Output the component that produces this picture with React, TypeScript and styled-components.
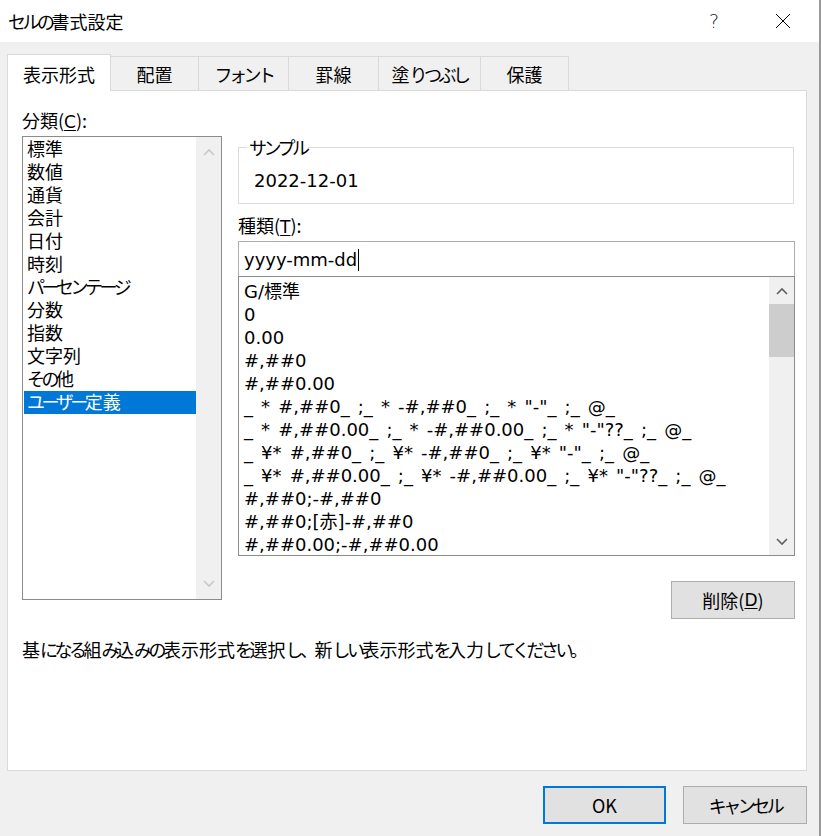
import { FC, Fragment } from "react";
import styled, { createGlobalStyle } from "styled-components";

const GlobalStyle = createGlobalStyle`
  html, body {
    margin: 0;
    padding: 0;
    background: #f0f0f0;
  }
  body {
    font-family: "DejaVu Sans", "Noto Sans CJK JP", sans-serif;
    font-size: 18px;
    color: #000;
  }
`;

const CATEGORIES = [
  "標準",
  "数値",
  "通貨",
  "会計",
  "日付",
  "時刻",
  "パーセンテージ",
  "分数",
  "指数",
  "文字列",
  "その他",
  "ユーザー定義",
];

const FORMATS = [
  "G/標準",
  "0",
  "0.00",
  "#,##0",
  "#,##0.00",
  '_ * #,##0_ ;_ * -#,##0_ ;_ * "-"_ ;_ @_',
  '_ * #,##0.00_ ;_ * -#,##0.00_ ;_ * "-"??_ ;_ @_',
  '_ ¥* #,##0_ ;_ ¥* -#,##0_ ;_ ¥* "-"_ ;_ @_',
  '_ ¥* #,##0.00_ ;_ ¥* -#,##0.00_ ;_ ¥* "-"??_ ;_ @_',
  "#,##0;-#,##0",
  "#,##0;[赤]-#,##0",
  "#,##0.00;-#,##0.00",
];

const TABS = [
  { label: "表示形式", width: 104 },
  { label: "配置", width: 88 },
  { label: "フォント", width: 90 },
  { label: "罫線", width: 90 },
  { label: "塗りつぶし", width: 102 },
  { label: "保護", width: 88 },
];

// kana in the Windows UI font are set proportionally, narrower than kanji
const KANA_RUN = /([\u3001-\u3002\u3040-\u30ff]+)/;
const Ja: FC<{ text: string }> = ({ text }) => (
  <>
    {text.split(KANA_RUN).map((part, i) =>
      i % 2 === 1 ? <Kana key={i}>{part}</Kana> : <Fragment key={i}>{part}</Fragment>
    )}
  </>
);

const Chevron: FC<{ up?: boolean; color: string }> = ({ up, color }) => (
  <svg width="12" height="8" viewBox="0 0 12 8">
    <polyline
      points={up ? "1,7 6,2 11,7" : "1,1 6,6 11,1"}
      fill="none"
      stroke={color}
      strokeWidth="1.6"
    />
  </svg>
);

export default function App() {
  return (
    <>
      <GlobalStyle />
      <Window>
        <TitleBar>
          <TitleText>
            <Ja text="セルの書式設定" />
          </TitleText>
          <HelpButton>?</HelpButton>
          <CloseButton>
            <svg width="16" height="16" viewBox="0 0 16 16">
              <path d="M1 1 L15 15 M15 1 L1 15" stroke="#000" strokeWidth="1" />
            </svg>
          </CloseButton>
        </TitleBar>

        <Body>
          <TabStrip>
            {TABS.map((t, i) => (
              <Tab key={t.label} $active={i === 0} $width={t.width}>
                <Ja text={t.label} />
              </Tab>
            ))}
          </TabStrip>

          <Panel>
            <PanelGrid>
              <Column>
                <FieldLabel>
                  分類(<u>C</u>):
                </FieldLabel>
                <ListBox $height={464}>
                  <ListItems $padTop={1} $padLeft={1}>
                    {CATEGORIES.map((c, i) => (
                      <ListItem key={c} $selected={i === CATEGORIES.length - 1} $indent={3}>
                        <Ja text={c} />
                      </ListItem>
                    ))}
                  </ListItems>
                  <ScrollBar>
                    <ScrollButton $height={30}>
                      <Chevron up color="#c8c8c8" />
                    </ScrollButton>
                    <ScrollTrack />
                    <ScrollButton $height={30}>
                      <Chevron color="#c8c8c8" />
                    </ScrollButton>
                  </ScrollBar>
                </ListBox>
              </Column>

              <Column $offset={38}>
                <GroupBox>
                  <GroupLegend>
                    <Ja text="サンプル" />
                  </GroupLegend>
                  <SampleValue>2022-12-01</SampleValue>
                </GroupBox>

                <FieldLabel $gap={10}>
                  種類(<u>T</u>):
                </FieldLabel>
                <TextBox>
                  yyyy-mm-dd
                  <Caret />
                </TextBox>
                <ListBox $height={280}>
                  <ListItems $padTop={3} $padLeft={5}>
                    {FORMATS.map((f) => (
                      <ListItem key={f} $indent={0} $wordSpacing={2.4}>
                        {f}
                      </ListItem>
                    ))}
                  </ListItems>
                  <ScrollBar>
                    <ScrollButton $height={27}>
                      <Chevron up color="#606060" />
                    </ScrollButton>
                    <ScrollTrack>
                      <ScrollThumb />
                    </ScrollTrack>
                    <ScrollButton $height={27}>
                      <Chevron color="#606060" />
                    </ScrollButton>
                  </ScrollBar>
                </ListBox>
                <DeleteRow>
                  <Button $width={124}>
                    削除(<u>D</u>)
                  </Button>
                </DeleteRow>
              </Column>
            </PanelGrid>

            <Description>
              <Ja text="基になる組み込みの表示形式を選択し、新しい表示形式を入力してください。" />
            </Description>
          </Panel>

          <Footer>
            <Button $width={123} $default>
              OK
            </Button>
            <Button $width={124}>
              <Ja text="キャンセル" />
            </Button>
          </Footer>
        </Body>
      </Window>
    </>
  );
}

const Kana = styled.span`
  letter-spacing: -3.5px;
`;

const Window = styled.div`
  width: 821px;
  height: 836px;
  display: flex;
  flex-direction: column;
  background: #f0f0f0;
  box-sizing: border-box;
  border-right: 2px solid #9a9a9a;
`;

const TitleBar = styled.div`
  height: 42px;
  flex-shrink: 0;
  display: flex;
  align-items: center;
  background: #fff;
  padding-left: 8px;
  padding-right: 13px;
`;

const TitleText = styled.div`
  flex: 1;
  font-family: "Noto Sans CJK JP", sans-serif;
  font-size: 18px;
  line-height: 24px;
`;

const HelpButton = styled.div`
  width: 46px;
  text-align: center;
  font-family: "DejaVu Sans", sans-serif;
  font-weight: 200;
  font-size: 19px;
  color: #222;
  margin-right: 23px;
`;

const CloseButton = styled.div`
  width: 46px;
  display: flex;
  justify-content: center;
`;

const Body = styled.div`
  flex: 1;
  display: flex;
  flex-direction: column;
  padding: 12px 12px 0 7px;
`;

const TabStrip = styled.div`
  display: flex;
  align-items: flex-start;
  height: 37px;
  margin-bottom: -1px;
`;

const Tab = styled.div<{ $active?: boolean; $width: number }>`
  box-sizing: border-box;
  width: ${({ $width }) => $width}px;
  display: flex;
  align-items: center;
  justify-content: center;
  font-family: "Noto Sans CJK JP", sans-serif;
  font-size: 18px;
  border: 1px solid #d9d9d9;
  ${({ $active }) =>
    $active
      ? `
    height: 37px;
    background: #fff;
    border-bottom: none;
    position: relative;
    z-index: 1;
    padding-top: 1px;
  `
      : `
    height: 35px;
    margin-top: 2px;
    border-left: none;
    background: #f0f0f0;
  `}
`;

const Panel = styled.div`
  width: 800px;
  height: 681px;
  box-sizing: border-box;
  background: #fff;
  border: 1px solid #d9d9d9;
  padding: 18px 0 0 14px;
`;

const PanelGrid = styled.div`
  display: grid;
  grid-template-columns: 200px 557px;
  column-gap: 16px;
  align-items: start;
`;

const Column = styled.div<{ $offset?: number }>`
  display: flex;
  flex-direction: column;
  padding-top: ${({ $offset }) => $offset ?? 0}px;
`;

const FieldLabel = styled.div<{ $gap?: number }>`
  height: 23px;
  font-family: "Noto Sans CJK JP", sans-serif;
  line-height: 23px;
  margin-top: ${({ $gap }) => $gap ?? 0}px;
  margin-bottom: 4px;

  u {
    font-family: "DejaVu Sans", sans-serif;
    font-size: 17px;
    line-height: 1;
    text-underline-offset: 2px;
  }
`;

const ListBox = styled.div<{ $height: number }>`
  box-sizing: border-box;
  height: ${({ $height }) => $height}px;
  border: 1px solid #8c8c8c;
  display: flex;
  overflow: hidden;
  background: #fff;
`;

const ListItems = styled.div<{ $padTop: number; $padLeft: number }>`
  flex: 1;
  min-width: 0;
  overflow: hidden;
  padding-top: ${({ $padTop }) => $padTop}px;
  padding-left: ${({ $padLeft }) => $padLeft}px;
`;

const ListItem = styled.div<{ $selected?: boolean; $indent: number; $wordSpacing?: number }>`
  height: 23px;
  line-height: 23px;
  white-space: pre;
  word-spacing: ${({ $wordSpacing }) => $wordSpacing ?? 0}px;
  padding-left: ${({ $indent }) => $indent}px;
  background: ${({ $selected }) => ($selected ? "#0078d7" : "transparent")};
  color: ${({ $selected }) => ($selected ? "#fff" : "#000")};
`;

const ScrollBar = styled.div`
  width: 25px;
  flex-shrink: 0;
  display: flex;
  flex-direction: column;
  background: #f0f0f0;
`;

const ScrollButton = styled.div<{ $height: number }>`
  height: ${({ $height }) => $height}px;
  flex-shrink: 0;
  display: flex;
  align-items: center;
  justify-content: center;
`;

const ScrollTrack = styled.div`
  flex: 1;
`;

const ScrollThumb = styled.div`
  height: 53px;
  background: #cdcdcd;
`;

const GroupBox = styled.div`
  position: relative;
  box-sizing: border-box;
  height: 57px;
  width: 556px;
  border: 1px solid #dcdcdc;
  padding: 21px 0 0 15px;
`;

const GroupLegend = styled.span`
  position: absolute;
  top: -12px;
  left: 8px;
  padding: 0 2px;
  background: #fff;
  font-family: "Noto Sans CJK JP", sans-serif;
  line-height: 23px;
`;

const SampleValue = styled.div`
  line-height: 23px;
`;

const TextBox = styled.div`
  box-sizing: border-box;
  height: 35px;
  border: 1px solid #adadad;
  border-bottom: none;
  display: flex;
  align-items: center;
  padding-left: 5px;
  padding-top: 1px;
`;

const Caret = styled.span`
  display: inline-block;
  width: 1px;
  height: 22px;
  background: #000;
  margin-left: 1px;
`;

const DeleteRow = styled.div`
  display: flex;
  justify-content: flex-end;
  margin-top: 25px;
`;

const Button = styled.div<{ $width: number; $default?: boolean }>`
  box-sizing: border-box;
  width: ${({ $width }) => $width}px;
  height: 38px;
  display: flex;
  align-items: center;
  justify-content: center;
  font-family: "Noto Sans CJK JP", sans-serif;
  background: #e1e1e1;
  border: ${({ $default }) => ($default ? "2px solid #0078d7" : "1px solid #adadad")};

  u {
    font-family: "DejaVu Sans", sans-serif;
    font-size: 17px;
    text-underline-offset: 2px;
  }
`;

const Description = styled.div`
  font-family: "Noto Sans CJK JP", sans-serif;
  line-height: 23px;
  margin-top: 19px;
`;

const Footer = styled.div`
  display: flex;
  justify-content: flex-end;
  gap: 17px;
  padding-top: 15px;
`;
